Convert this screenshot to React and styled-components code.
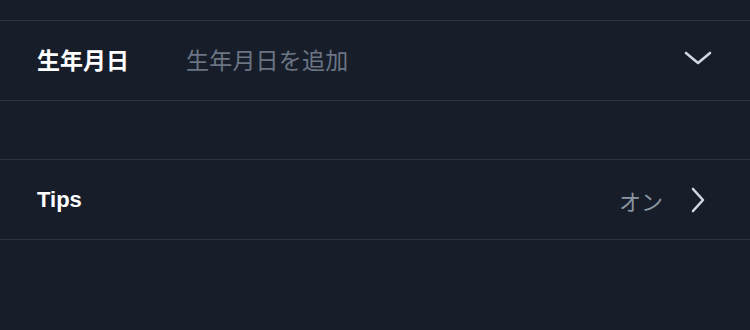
import styled, { createGlobalStyle } from "styled-components";

const GlobalStyle = createGlobalStyle`
  html, body {
    margin: 0;
    padding: 0;
    background: #171e2a;
  }
  body {
    font-family: "Noto Sans CJK JP", "Noto Sans", "Liberation Sans", sans-serif;
  }
`;

const Screen = styled.div`
  width: 750px;
  height: 330px;
  background: #171e2a;
  overflow: hidden;
`;

const TopSpace = styled.div`
  height: 20px;
`;

const Divider = styled.div`
  height: 1px;
  background: #2c3543;
`;

const Row = styled.div`
  height: 79px;
  box-sizing: border-box;
  display: flex;
  align-items: center;
  padding: ${(props) => props.pad || "0 38px 4px 37px"};
`;

const Label = styled.span`
  font-weight: 700;
  color: #ffffff;
  font-size: ${(props) => (props.latin ? "22px" : "23px")};
  font-family: ${(props) =>
    props.latin
      ? '"Liberation Sans", "Noto Sans CJK JP", sans-serif'
      : '"Noto Sans CJK JP", sans-serif'};
  width: ${(props) => props.width || "auto"};
  flex-shrink: 0;
`;

const Placeholder = styled.span`
  flex: 1;
  color: #6b7584;
  font-size: 23px;
  letter-spacing: 0.2px;
`;

const Value = styled.span`
  margin-left: auto;
  color: #8c96a3;
  font-size: 22px;
  margin-right: 27px;
`;

const Gap = styled.div`
  height: 58px;
`;

const Icon = styled.svg`
  display: block;
  color: #d0d6de;
`;

const ChevronDown = () => (
  <Icon width="28" height="18" viewBox="0 0 28 18">
    <path
      d="M2 3 L14 13 L26 3"
      fill="none"
      stroke="currentColor"
      strokeWidth="2.6"
      strokeLinecap="round"
      strokeLinejoin="round"
    />
  </Icon>
);

const ChevronRight = () => (
  <Icon width="16" height="28" viewBox="0 0 16 28">
    <path
      d="M3 3 L13 14 L3 25"
      fill="none"
      stroke="currentColor"
      strokeWidth="2.6"
      strokeLinecap="round"
      strokeLinejoin="round"
    />
  </Icon>
);

const App = () => {
  return (
    <Screen>
      <GlobalStyle />
      <TopSpace />
      <Divider />
      <Row>
        <Label width="149px">生年月日</Label>
        <Placeholder>生年月日を追加</Placeholder>
        <ChevronDown />
      </Row>
      <Divider />
      <Gap />
      <Divider />
      <Row pad="0 44px 0 37px">
        <Label latin>Tips</Label>
        <Value>オン</Value>
        <ChevronRight />
      </Row>
      <Divider />
    </Screen>
  );
};

export default App;
